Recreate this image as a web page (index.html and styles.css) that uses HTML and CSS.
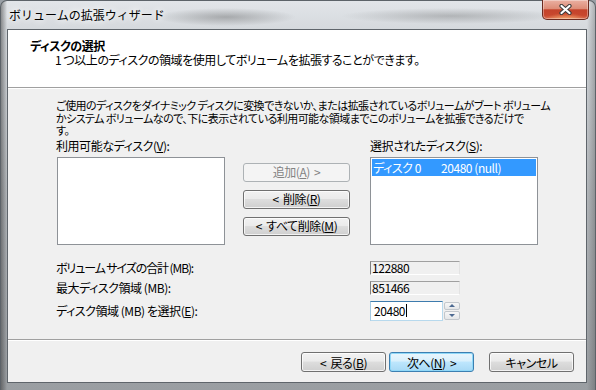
FILE: index.html
```html
<!DOCTYPE html>
<html lang="ja">
<head>
    <meta charset="UTF-8">
    <title>ボリュームの拡張ウィザード</title>
    <link rel="stylesheet" href="styles.css">
</head>
<body>
    <div class="window">
        <div class="titlebar">
            <span class="title">ボリュームの拡張ウィザード</span>
            <button class="close-btn" aria-label="閉じる">
                <svg width="13" height="11" viewBox="0 0 13 11">
                    <path d="M2.5 2 L10.5 9 M10.5 2 L2.5 9" stroke="#3b3b3b" stroke-width="4.2" stroke-linecap="round"/>
                    <path d="M2.5 2 L10.5 9 M10.5 2 L2.5 9" stroke="#fff" stroke-width="2.2" stroke-linecap="round"/>
                </svg>
            </button>
        </div>

        <div class="client">
            <div class="wizard-head">
                <h1>ディスクの選択</h1>
                <p>1 つ以上のディスクの領域を使用してボリュームを拡張することができます。</p>
            </div>

            <div class="wizard-body">
                <p class="note">ご使用のディスクをダイナミック ディスクに変換できないか、または拡張されているボリュームがブート ボリューム<br>かシステム ボリュームなので、下に表示されている利用可能な領域までこのボリュームを拡張できるだけで<br>す。</p>

                <div class="disk-lists">
                    <label class="list-label">利用可能なディスク(<u>V</u>):</label>
                    <span></span>
                    <label class="list-label">選択されたディスク(<u>S</u>):</label>

                    <div class="listbox available"></div>
                    <div class="move-buttons">
                        <button class="btn" disabled>追加(<u>A</u>) &gt;</button>
                        <button class="btn">&lt; 削除(<u>R</u>)</button>
                        <button class="btn">&lt; すべて削除(<u>M</u>)</button>
                    </div>
                    <div class="listbox">
                        <div class="list-item selected">
                            <span class="disk-name">ディスク 0</span>
                            <span>20480 (null)</span>
                        </div>
                    </div>
                </div>

                <div class="size-fields">
                    <span class="tight">ボリューム サイズの合計 (MB):</span>
                    <span class="readonly">122880</span>

                    <span>最大ディスク領域 (MB):</span>
                    <span class="readonly">851466</span>

                    <span>ディスク領域 (MB) を選択(<u>E</u>):</span>
                    <div class="spin">
                        <div class="spin-input">20480<span class="caret"></span></div>
                        <div class="spin-buttons">
                            <span class="spin-btn"><i class="arrow up"></i></span>
                            <span class="spin-btn"><i class="arrow down"></i></span>
                        </div>
                    </div>
                </div>
            </div>

            <div class="wizard-foot">
                <button class="btn nav">&lt; 戻る(<u>B</u>)</button>
                <button class="btn nav default">次へ(<u>N</u>) &gt;</button>
                <button class="btn nav cancel">キャンセル</button>
            </div>
        </div>
    </div>
</body>
</html>
```

FILE: styles.css
```css
* {
    margin: 0;
    padding: 0;
    box-sizing: border-box;
}

body {
    width: 596px;
    height: 390px;
    overflow: hidden;
    font-family: "Noto Sans CJK JP", "Noto Sans", sans-serif;
    font-size: 12px;
    font-feature-settings: "palt";
    letter-spacing: -0.45px;
    color: #000;
    background: #9aa0a6;
}

u {
    text-decoration: underline;
    text-underline-offset: 1px;
}

/* window frame (aero glass) */
.window {
    width: 596px;
    height: 390px;
    display: flex;
    flex-direction: column;
    padding: 0 8px 7px 6px;
    border: 1px solid #5d6369;
    border-bottom: none;
    border-radius: 7px 7px 0 0;
    background:
        radial-gradient(ellipse 70px 9px at 225px 16px, rgba(70, 70, 70, 0.35), transparent),
        radial-gradient(ellipse 110px 8px at 450px 15px, rgba(70, 70, 70, 0.28), transparent),
        linear-gradient(to right, rgba(40, 40, 40, 0.45) 0, rgba(60, 60, 60, 0.1) 5px, rgba(60, 60, 60, 0) 6px),
        linear-gradient(to left, rgba(60, 60, 60, 0.3) 0, rgba(60, 60, 60, 0) 8px),
        linear-gradient(#e2e5e9 0, #d5d9dd 28px, #b3b7bb 50%, #9a9ea2 100%);
}

.titlebar {
    height: 28px;
    display: flex;
    justify-content: space-between;
    align-items: flex-start;
}

.title {
    margin: 7px 0 0 2px;
    font-size: 12px;
    line-height: 14px;
    font-feature-settings: normal;
    letter-spacing: 0;
    color: #000;
    text-shadow: 0 0 6px #fff, 0 0 10px #fff;
}

.close-btn {
    width: 47px;
    height: 20px;
    margin: -1px -2px 0 0;
    display: flex;
    align-items: center;
    justify-content: center;
    border: 1px solid #6b2b20;
    border-top: none;
    border-radius: 0 0 5px 5px;
    background:
        radial-gradient(ellipse 20px 6px at 50% 100%, rgba(255, 190, 120, 0.7), transparent),
        linear-gradient(#eab0a2 0%, #dd8d78 45%, #c4432b 52%, #c8472e 80%, #d86a4c 100%);
    box-shadow: inset 0 0 0 1px rgba(255, 255, 255, 0.35);
}

/* client area */
.client {
    flex: 1;
    display: flex;
    flex-direction: column;
    border: 1px solid #5f656b;
    background: #f0f0f0;
}

.wizard-head {
    height: 58px;
    padding: 9px 0 0 22px;
    background: #fff;
    border-bottom: 1px solid #a0a0a0;
}

.wizard-head h1 {
    font-size: 12px;
    line-height: 14px;
    font-weight: 700;
}

.wizard-head p {
    line-height: 14px;
    padding-left: 25px;
}

.wizard-body {
    flex: 1;
    padding: 10px 0 0 48px;
    border-top: 1px solid #fff;
}

.note {
    font-size: 11px;
    line-height: 12.5px;
    letter-spacing: -0.55px;
    white-space: nowrap;
    margin-bottom: 2px;
}

.disk-lists {
    display: grid;
    grid-template-columns: 169px 145px 168px;
    grid-template-rows: 14px 88px;
    row-gap: 4px;
}

.list-label {
    line-height: 14px;
}

.listbox {
    background: #fff;
    border: 1px solid #8e9297;
    padding: 1px;
}

.listbox.available {
    margin-left: 1px;
}

.list-item {
    height: 17px;
    line-height: 17px;
    display: flex;
    padding-left: 1px;
}

.list-item.selected {
    background: #3399ff;
    color: #fff;
}

.disk-name {
    width: 68px;
}

.move-buttons {
    display: flex;
    flex-direction: column;
    gap: 8px;
    padding: 6px 0 0 18px;
    width: 125px;
}

.btn {
    height: 19px;
    border: 1px solid #707070;
    border-radius: 3px;
    background: linear-gradient(#f2f2f2 0%, #ebebeb 45%, #dddddd 50%, #cfcfcf 100%);
    box-shadow: inset 0 0 0 1px rgba(255, 255, 255, 0.75);
    font: inherit;
    font-feature-settings: "palt";
    letter-spacing: -0.45px;
    line-height: 16px;
    color: #000;
    text-align: center;
    word-spacing: 2px;
}

.btn:disabled {
    border-color: #adb2b5;
    background: #f4f4f4;
    box-shadow: none;
    color: #838383;
}

/* size fields */
.size-fields {
    display: grid;
    grid-template-columns: 314px 90px;
    grid-template-rows: 14px 14px 20px;
    row-gap: 6px;
    margin-top: 16px;
    align-items: center;
}

.tight {
    letter-spacing: -1.1px;
}

.readonly {
    height: 14px;
    line-height: 12px;
    padding-left: 1px;
    border: 1px solid;
    border-color: #a0a0a0 #e3e3e3 #fff #808080;
}

.spin {
    display: flex;
    height: 20px;
    gap: 1px;
}

.spin-input {
    flex: 1;
    display: flex;
    align-items: center;
    padding-left: 3px;
    background: #fff;
    border: 1px solid;
    border-color: #3d7bad #b7d9ed #b7d9ed #a4c9e3;
}

.caret {
    display: inline-block;
    width: 1px;
    height: 13px;
    margin-left: 1px;
    background: #000;
}

.spin-buttons {
    width: 16px;
    display: flex;
    flex-direction: column;
    gap: 1px;
    padding: 1px 0;
}

.spin-btn {
    flex: 1;
    display: flex;
    align-items: center;
    justify-content: center;
    border: 1px solid #c2c7cc;
    border-radius: 2px;
    background: linear-gradient(#f7f7f7, #e4e6e8);
}

.arrow {
    width: 0;
    height: 0;
    border-left: 3px solid transparent;
    border-right: 3px solid transparent;
}

.arrow.up {
    border-bottom: 3px solid #4d6a92;
}

.arrow.down {
    border-top: 3px solid #4d6a92;
}

/* footer */
.wizard-foot {
    height: 43px;
    display: flex;
    justify-content: flex-end;
    align-items: flex-start;
    gap: 3px;
    padding: 12px 12px 0 0;
    border-top: 1px solid #a0a0a0;
    box-shadow: inset 0 1px 0 #fff;
}

.btn.nav {
    width: 85px;
    height: 20px;
    line-height: 17px;
}

.btn.default {
    border-color: #3c7fb1;
    background: linear-gradient(#eaf6fd 0%, #d9f0fc 45%, #bee6fd 50%, #a7d9f5 100%);
    box-shadow: inset 0 0 0 1px #8fd8f8;
}

.btn.cancel {
    margin-left: 12px;
}
```
